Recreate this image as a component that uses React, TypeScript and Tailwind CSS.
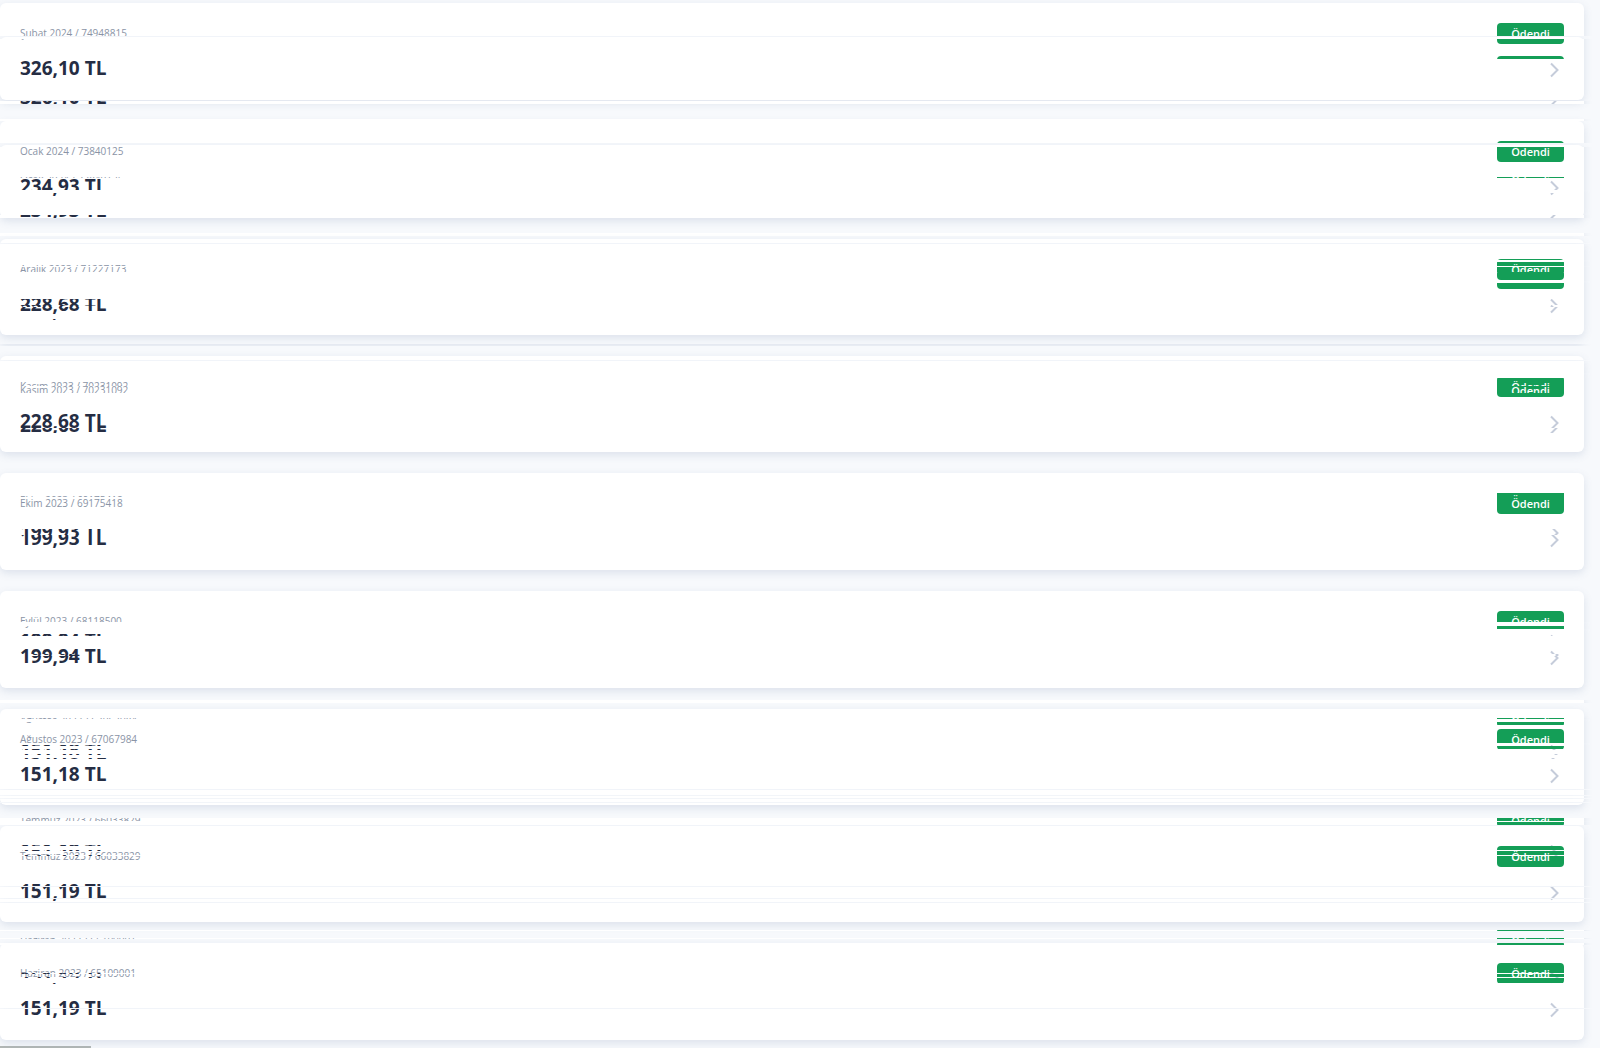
type Slice = [top: number, height: number, source: number];

type Invoice = {
  period: string;
  amount: string;
  slices: Slice[];
};

const invoices: Invoice[] = [
  { period: "Şubat 2024 / 74948815", amount: "326,10 TL", slices: [[33, 3, -1], [53, 3, 20], [98, 3, 69]] },
  { period: "Ocak 2024 / 73840125", amount: "234,93 TL", slices: [[-2, 2, 5], [22, 4, -2], [56, 1, 28], [69, 3, 10], [94, 3, 70], [112, 3, 5]] },
  { period: "Aralık 2023 / 71227173", amount: "228,68 TL", slices: [[4, 1, -1], [21, 2, 10], [27, 1, 10], [33, 3, 22], [42, 2, 10], [44, 6, 35], [58, 2, 55], [66, 2, 60], [80, 1, 74], [105, 2, 98]] },
  { period: "Kasım 2023 / 70231092", amount: "228,68 TL", slices: [[4, 1, -1], [17, 5, 10], [30, 7, 26], [72, 5, 68]] },
  { period: "Ekim 2023 / 69175418", amount: "199,93 TL", slices: [[20, 4, 23], [56, 6, 63]] },
  { period: "Eylül 2023 / 68118500", amount: "199,94 TL", slices: [[31, 4, 10], [35, 3, 35], [38, 4, 10], [43, 2, 59], [63, 2, 66]] },
  { period: "Ağustos 2023 / 67067984", amount: "151,18 TL", slices: [[-9, 3, 5], [9, 1, 28], [13, 3, 36], [34, 2, 10], [36, 1, 60], [40, 1, 63], [45, 1, 68], [49, 1, 71], [80, 1, -1], [86, 1, -2], [89, 1, -2], [93, 1, -2]] },
  { period: "Temmuz 2023 / 66033829", amount: "151,19 TL", slices: [[-8, 3, 28], [-5, 1, 10], [-4, 3, 36], [19, 1, 60], [24, 1, 63], [29, 1, 68], [60, 1, -1], [72, 1, -1], [76, 1, -1]] },
  { period: "Haziran 2023 / 65109001", amount: "151,19 TL", slices: [[-13, 1, 22], [-5, 1, 28], [0, 2, 22], [30, 1, 61], [34, 1, 67], [40, 1, 74], [65, 1, -1]] },
];

function CardFace({ period, amount }: { period: string; amount: string }) {
  return (
    <span className="flex h-full items-start justify-between rounded-md bg-white px-5 pt-5 shadow-[0_3px_8px_rgba(80,105,150,0.16)]">
      <span className="flex flex-col">
        <span className="text-[10px] leading-[21px] text-[#8a94a6]">{period}</span>
        <span className="mt-3 text-[19px] leading-6 font-bold text-[#252d43]">{amount}</span>
      </span>
      <span className="flex flex-col items-end">
        <span className="w-[67px] rounded bg-[#149e57] text-center text-[11px] leading-[21px] font-semibold text-white">
          Ödendi
        </span>
        <svg className="mt-[18px] mr-[5px] h-4 w-[9px]" viewBox="0 0 9 16" fill="none" stroke="#c5ccda" strokeWidth="2" aria-hidden="true">
          <path d="M1 1.5 7.5 8 1 14.5" />
        </svg>
      </span>
    </span>
  );
}

/* Scroll trail: thin bands that repaint part of the card at another height. */
function Trail({ invoice }: { invoice: Invoice }) {
  return (
    <span aria-hidden="true" className="pointer-events-none">
      {invoice.slices.map(([top, height, source]) => (
        <span key={top} className="absolute left-0 -right-4 block overflow-hidden bg-[#f7f9fc] pr-4" style={{ top, height }}>
          <span className="block h-[97px]" style={{ marginTop: -source }}>
            <CardFace period={invoice.period} amount={invoice.amount} />
          </span>
        </span>
      ))}
    </span>
  );
}

export default function App() {
  return (
    <main className="flex min-h-screen flex-col justify-between overflow-hidden bg-[#f7f9fc] pt-[3px] font-['Open_Sans',sans-serif]">
      <ul className="flex flex-col gap-[21px] pr-4">
        {invoices.map((invoice) => (
          <li key={invoice.period} className="relative h-[97px] nth-[4n]:h-24 nth-[4n+3]:h-24">
            <a href="#" className="block h-full">
              <CardFace period={invoice.period} amount={invoice.amount} />
            </a>
            <Trail invoice={invoice} />
          </li>
        ))}
      </ul>
      <div className="h-[2px] w-[91px] bg-[#b3b8b6]" />
    </main>
  );
}
